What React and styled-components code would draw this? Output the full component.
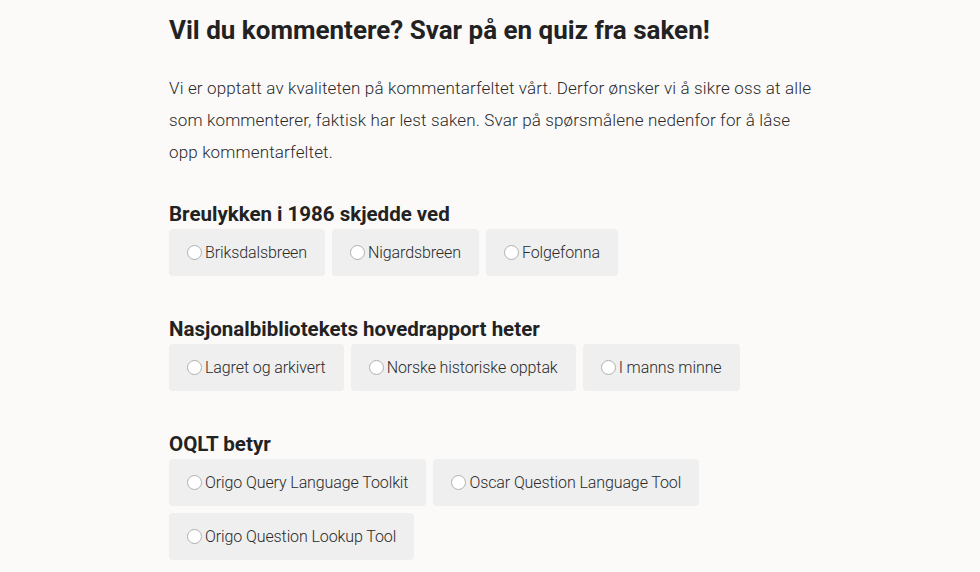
import React from 'react';
import styled, { createGlobalStyle } from 'styled-components';

const GlobalStyle = createGlobalStyle`
  html, body {
    margin: 0;
    background: #fbfaf9;
  }
  body {
    font-family: Roboto, "Liberation Sans", sans-serif;
    color: #2a2a2a;
  }
`;

const Page = styled.div`
  width: 700px;
  padding: 13px 0 0 169px;
`;

const Title = styled.h2`
  margin: 0 0 25px;
  font-size: 26px;
  line-height: 34px;
  font-weight: 700;
  color: #222;
`;

const Intro = styled.p`
  margin: 0 0 34px;
  font-size: 17px;
  line-height: 32px;
  font-weight: 300;
  letter-spacing: 0.15px;
  color: #2a2a2a;
`;

const Question = styled.fieldset`
  border: none;
  margin: 0 0 41px;
  padding: 0;
  min-width: 0;

  &:last-child {
    margin-bottom: 0;
  }
`;

const Heading = styled.legend`
  padding: 0;
  font-size: 20.5px;
  line-height: 24px;
  font-weight: 700;
  color: #222;
  margin-bottom: 2px;
`;

const Options = styled.div`
  display: flex;
  flex-wrap: wrap;
  gap: 7px;
  padding-top: 1px;
`;

const Option = styled.label`
  display: flex;
  align-items: center;
  height: 47px;
  box-sizing: border-box;
  padding: 0 18px;
  background: #efefef;
  border-radius: 4px;
  font-size: 16px;
  font-weight: 300;
  letter-spacing: -0.1px;
  color: #2a2a2a;
  cursor: pointer;
`;

const Radio = styled.span`
  width: 15px;
  height: 15px;
  margin-right: 3px;
  border-radius: 50%;
  border: 1px solid #b0b0b0;
  background: #fff;
  box-sizing: border-box;
  flex-shrink: 0;
`;

const quiz = [
  {
    q: 'Breulykken i 1986 skjedde ved',
    a: ['Briksdalsbreen', 'Nigardsbreen', 'Folgefonna'],
  },
  {
    q: 'Nasjonalbibliotekets hovedrapport heter',
    a: ['Lagret og arkivert', 'Norske historiske opptak', 'I manns minne'],
  },
  {
    q: 'OQLT betyr',
    a: ['Origo Query Language Toolkit', 'Oscar Question Language Tool', 'Origo Question Lookup Tool'],
  },
];

export default function App() {
  return (
    <>
      <GlobalStyle />
      <Page>
        <Title>Vil du kommentere? Svar på en quiz fra saken!</Title>
        <Intro>
          Vi er opptatt av kvaliteten på kommentarfeltet vårt. Derfor ønsker vi å sikre oss at alle
          <br />
          som kommenterer, faktisk har lest saken. Svar på spørsmålene nedenfor for å låse
          <br />
          opp kommentarfeltet.
        </Intro>
        {quiz.map(item => (
          <Question key={item.q}>
            <Heading>{item.q}</Heading>
            <Options>
              {item.a.map(answer => (
                <Option key={answer}>
                  <Radio />
                  {answer}
                </Option>
              ))}
            </Options>
          </Question>
        ))}
      </Page>
    </>
  );
}
